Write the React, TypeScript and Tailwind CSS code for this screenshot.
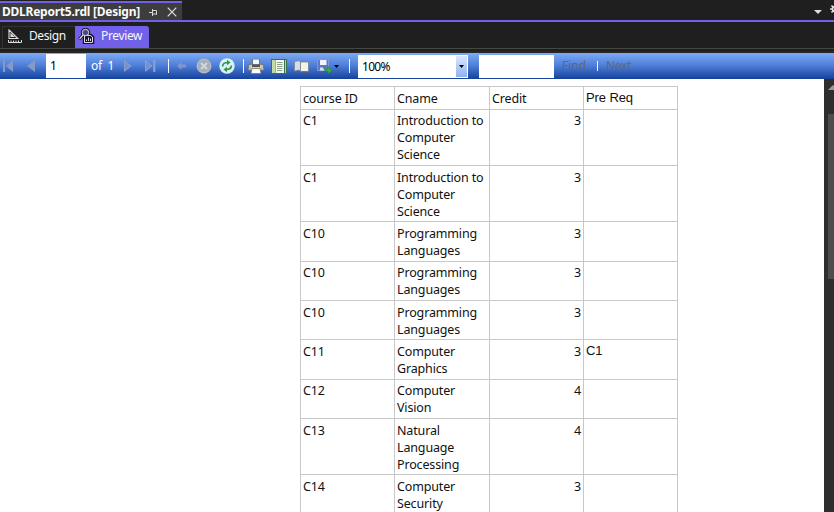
import React from "react";

const HEAD = ["course ID", "Cname", "Credit", "Pre Req"];

type Row = { id: string; name: string[]; credit: number; pre?: string; h: string; pad: string };

const ROWS: Row[] = [
  { id: "C1", name: ["Introduction to", "Computer", "Science"], credit: 3, h: "h-[56px]", pad: "pt-[2px]" },
  { id: "C1", name: ["Introduction to", "Computer", "Science"], credit: 3, h: "h-[56px]", pad: "pt-[3px]" },
  { id: "C10", name: ["Programming", "Languages"], credit: 3, h: "h-[40px]", pad: "pt-[3px]" },
  { id: "C10", name: ["Programming", "Languages"], credit: 3, h: "h-[39px]", pad: "pt-[2px]" },
  { id: "C10", name: ["Programming", "Languages"], credit: 3, h: "h-[39px]", pad: "pt-[3px]" },
  { id: "C11", name: ["Computer", "Graphics"], credit: 3, pre: "C1", h: "h-[40px]", pad: "pt-[3px]" },
  { id: "C12", name: ["Computer", "Vision"], credit: 4, h: "h-[39px]", pad: "pt-[2px]" },
  { id: "C13", name: ["Natural", "Language", "Processing"], credit: 4, h: "h-[56px]", pad: "pt-[3px]" },
  { id: "C14", name: ["Computer", "Security"], credit: 3, h: "h-[56px]", pad: "pt-[3px]" },
];

const GRID = "grid shrink-0 grid-cols-[94px_95px_94px_94px] border-b border-[#c8c8c8]";
const CELL = "border-r border-[#c8c8c8] pl-[2px]";
const ARIAL_CELL =
  "border-r border-[#c8c8c8] pl-[2px] pt-[2px] font-['Liberation_Sans',Arial,sans-serif] text-[13px] tracking-[-0.1px]";

function Divider({ className = "h-[14px]" }: { className?: string }) {
  return <div className={`w-px shrink-0 bg-[#f4f8ff] ${className}`} />;
}

function DocumentTabs() {
  return (
    <div className="flex h-[20px] shrink-0 items-stretch bg-[#1f1f1f]">
      <div className="mt-px flex w-[182px] items-center border-t-2 border-[#7160e8] bg-[#3d3d3d] pl-[2px]">
        <span className="w-[138px] whitespace-nowrap text-[12px] font-bold leading-[16px] tracking-[-0.24px] text-[#fafafa]">
          DDLReport5.rdl [Design]
        </span>
        <svg className="ml-[8px]" width="10" height="10" viewBox="0 0 10 10" fill="none" stroke="#d6d6d6">
          <path d="M1 5.500h3M4.500 2v7M5 3.500h3.500v4M5 7h4" />
        </svg>
        <svg className="ml-[9px]" width="10" height="10" viewBox="0 0 10 10" fill="none" stroke="#e0e0e0" strokeWidth="1.2">
          <path d="M.7 .7l8.6 8.6M9.3 .7L.7 9.3" />
        </svg>
      </div>
      <div className="ml-auto flex w-[20px] items-center gap-[8px] overflow-hidden pt-[3px]">
        <svg className="shrink-0" width="8" height="4" viewBox="0 0 8 4">
          <path d="M0 0h8L4 4z" fill="#dedede" />
        </svg>
        <svg className="mt-[-5px] shrink-0" width="10" height="10" viewBox="0 0 10 10" fill="none" stroke="#dedede">
          <circle cx="5" cy="5" r="2.5" strokeWidth="1.8" />
          <path d="M5 0v2M5 8v2M0 5h2M8 5h2M1.5 1.5l1.5 1.5M1.5 8.5L3 7" strokeWidth="1.6" />
        </svg>
      </div>
    </div>
  );
}

function ViewTabs() {
  return (
    <div className="flex h-[31px] shrink-0 flex-col border-t-2 border-[#7160e8] bg-[#1f1f1f]">
      <div className="flex h-[27px] shrink-0 items-end border-b border-[#444840] pl-[2px] text-[12px] text-[#f5f5f5]">
        <div className="flex h-[22px] w-[73px] items-center border-l border-t border-[#333] pb-[3px] pl-[5px]">
          <svg width="14" height="14" viewBox="0 0 14 14" fill="none" stroke="#dedede">
            <path d="M1 .8L9.800 9.500H1zM3 5v2.500h2.500z" strokeWidth="1.100" />
            <path d="M.5 11v2.500h13V11M3 11.500v2M5.500 11.500v2M8 11.500v2M10.500 11.500v2" />
          </svg>
          <span className="ml-[7px] tracking-[-0.4px]">Design</span>
        </div>
        <div className="flex h-[22px] w-[74px] items-center rounded-tr-[3px] bg-[#7160e8] pb-[2px] pl-[3px]">
          <svg width="17" height="16" viewBox="0 0 17 16" fill="none">
            <circle cx="7.500" cy="4.500" r="3.400" stroke="#17171c" strokeWidth="2.600" />
            <path d="M5 7L1.200 11.300" stroke="#17171c" strokeWidth="3" />
            <path d="M5.500 6.500h7.500l2.500 2v7h-10z" fill="#17171c" stroke="#17171c" strokeWidth="1.500" />
            <path d="M6.500 7.500h6l2 1.500v5.500h-8z" stroke="#dcdae6" />
            <path d="M8.500 13v-1.500M10.500 13v-3.500M12.500 13v-2.500" stroke="#dcdae6" />
            <circle cx="7.500" cy="4.500" r="3.200" fill="#4d4489" stroke="#dcdae6" />
            <path d="M5 7L1.500 11" stroke="#dcdae6" strokeWidth="1.200" />
          </svg>
          <span className="ml-[6px] tracking-[-0.35px]">Preview</span>
        </div>
      </div>
    </div>
  );
}

function ReportToolbar() {
  return (
    <div className="flex h-[28px] shrink-0 flex-col border-t-2 border-[#25272b] bg-[#1f1f1f]">
      <div className="flex h-[26px] shrink-0 items-center bg-linear-to-b from-[#7dabf5] via-[#4c7cd6] to-[#14419c] text-[12px]">
        <svg className="ml-[3px] shrink-0" width="11" height="12" viewBox="0 0 11 12" fill="#8399c6">
          <path d="M0 0h2v12H0zM10 0v12L3 6z" />
        </svg>
        <svg className="ml-[13px] shrink-0" width="8" height="12" viewBox="0 0 8 12" fill="#8399c6">
          <path d="M8 0v12L0 6z" />
        </svg>
        <div className="ml-[11px] h-[24px] w-[40px] shrink-0 bg-white pl-[4px] leading-[23px] text-black">1</div>
        <span className="ml-[5px] w-[27px] shrink-0 whitespace-pre tracking-[-0.3px] text-white">of  1</span>
        <svg className="ml-[6px] shrink-0" width="8" height="12" viewBox="0 0 8 12" fill="#7594cb" stroke="#93a6cc" strokeWidth=".8">
          <path d="M.5 .7v10.600L7 6z" />
        </svg>
        <svg className="ml-[13px] shrink-0" width="11" height="12" viewBox="0 0 11 12" fill="#7594cb" stroke="#93a6cc" strokeWidth=".8">
          <path d="M.5 .7v10.600L7 6zM8.500 .5h1.500v11H8.500z" />
        </svg>
        <Divider className="ml-[12px] h-[14px]" />
        <svg className="ml-[8px] shrink-0" width="9" height="8" viewBox="0 0 9 8" fill="#8297c4">
          <path d="M4.500 0v2.500H9v3H4.500V8L0 4z" />
        </svg>
        <svg className="ml-[10px] shrink-0" width="16" height="16" viewBox="0 0 16 16">
          <circle cx="8" cy="8" r="7.500" fill="#a6adba" />
          <circle cx="8" cy="8" r="6.500" fill="none" stroke="#b9bec9" />
          <path d="M5 5l6 6M11 5l-6 6" stroke="#d3d6dc" strokeWidth="1.900" />
        </svg>
        <svg className="ml-[7px] shrink-0" width="16" height="16" viewBox="0 0 16 16">
          <circle cx="8" cy="8" r="7.700" fill="#d9f1f7" />
          <g fill="none" stroke="#2c9a45" strokeWidth="1.700">
            <path d="M3.600 8.500C3.600 5.500 5.500 4.500 9 4.500" />
            <path d="M12.400 7.500c0 3-1.900 4-5.400 4" />
          </g>
          <path d="M8 1.800L11.500 4.500 8 7.300zM8 8.700L4.500 11.500 8 14.200z" fill="#2c9a45" />
        </svg>
        <Divider className="ml-[8px] h-[14px]" />
        <svg className="ml-[4px] shrink-0" width="16" height="15" viewBox="0 0 16 15">
          <path d="M4.500 0h7v6h-7z" fill="#f6f6f4" stroke="#77746c" />
          <path d="M1 5.500h14L16 11H0z" fill="#d3d0c8" stroke="#76736d" strokeWidth=".8" />
          <path d="M4 5.500h8v2.500H4z" fill="#56575d" />
          <path d="M4 9.500h8l1 5H3z" fill="#fafafa" stroke="#77746c" strokeWidth=".7" />
          <path d="M1.500 9h2M12.500 9h2" stroke="#b99c36" />
        </svg>
        <svg className="ml-[7px] shrink-0" width="16" height="15" viewBox="0 0 16 15">
          <path d="M0 0h16v15H0z" fill="#3c6e52" />
          <path d="M1 1h3v13H1z" fill="#c5dba6" />
          <path d="M4.500 1H13v13H4.500z" fill="#f3f8e9" />
          <path d="M6 3.500h5.500M6 5.500h5.500M6 7.500h5.500M6 9.500h5.500M6 11.500h5" stroke="#8ba08a" />
          <path d="M14.500 1v13" stroke="#b7d0a7" />
        </svg>
        <svg className="ml-[7px] shrink-0" width="15" height="13" viewBox="0 0 15 13">
          <path d="M.5 1.500L5 .7 6.500 2v9L5 10 .5 11z" fill="#d9dce2" stroke="#7b879f" strokeWidth=".8" />
          <path d="M6.500 2h8v9.500h-8z" fill="#f2f2ec" stroke="#777f8d" strokeWidth=".8" />
          <path d="M7 12h7.500" stroke="#6d6249" />
        </svg>
        <svg className="ml-[8px] shrink-0" width="16" height="15" viewBox="0 0 16 15">
          <path d="M.5 .5h11v11H.5z" fill="#6277c3" stroke="#8296dc" />
          <path d="M3 1h6.500v5H3z" fill="#f2f4fc" />
          <path d="M3 8.500h4v3H3z" fill="#d9deef" />
          <path d="M6.500 7.500c1 2 2.500 2.500 4.500 2.500V7.500l4 4-4 3.500v-2.500c-3 0-4.500-2-4.500-5z" fill="#38ad43" stroke="#237c38" strokeWidth=".5" />
        </svg>
        <svg className="ml-px shrink-0" width="5" height="3" viewBox="0 0 5 3"><path d="M0 0h5L2.500 3z" /></svg>
        <Divider className="ml-[10px] h-[14px]" />
        <div className="ml-[8px] flex h-[23px] w-[110px] shrink-0 items-center bg-white p-px pl-[4px] text-black">
          <span className="pt-[2px] tracking-[-0.7px]">100%</span>
          <span className="ml-auto flex h-[21px] w-[11px] items-center justify-center bg-linear-to-b from-[#dbe8ff] to-[#8eb2ee]">
            <svg width="5" height="3" viewBox="0 0 5 3"><path d="M0 0h5L2.500 3z" /></svg>
          </span>
        </div>
        <div className="ml-[11px] h-[23px] w-[75px] shrink-0 bg-white" />
        <span className="ml-[8px] w-[26px] shrink-0 text-[#5c6880]">Find</span>
        <Divider className="ml-[9px] h-[10px]" />
        <span className="ml-[8px] tracking-[-0.3px] text-[#5c6880]">Next</span>
      </div>
    </div>
  );
}

function ReportTable() {
  return (
    <div className="ml-[300px] mt-[7px] flex w-[378px] shrink-0 flex-col border-l border-t border-[#c8c8c8] text-[12.5px] leading-[17px] tracking-[-0.15px] text-[#111]">
      <div className={`${GRID} h-[23px]`}>
        {HEAD.map((label, i) => (
          <div key={label} className={i === 3 ? ARIAL_CELL : `${CELL} pt-[3px]`}>
            {label}
          </div>
        ))}
      </div>
      {ROWS.map((row, i) => (
        <div key={i} className={`${GRID} ${row.h}`}>
          <div className={`${CELL} ${row.pad}`}>{row.id}</div>
          <div className={`${CELL} ${row.pad}`}>
            {row.name.map((line) => (
              <div key={line} className="whitespace-nowrap">{line}</div>
            ))}
          </div>
          <div className={`${CELL} ${row.pad} pr-[2px] text-right`}>{row.credit}</div>
          <div className={ARIAL_CELL}>{row.pre}</div>
        </div>
      ))}
    </div>
  );
}

export default function App() {
  return (
    <div className="flex h-[512px] w-[834px] flex-col overflow-hidden bg-white font-['Noto_Sans',sans-serif]">
      <DocumentTabs />
      <ViewTabs />
      <ReportToolbar />
      <div className="flex min-h-0 flex-1">
        <div className="flex min-w-0 flex-1 flex-col overflow-hidden bg-white">
          <ReportTable />
        </div>
        <div className="flex w-[10px] shrink-0 flex-col items-end overflow-hidden bg-[#2e2e2e]">
          <svg className="mt-[6px] shrink-0" width="6" height="5" viewBox="0 0 6 5"><path d="M0 5L5 0l1 1v4z" fill="#999" /></svg>
          <div className="mt-[24px] h-[165px] w-[6px] shrink-0 bg-[#4d4d4d]" />
        </div>
      </div>
    </div>
  );
}
